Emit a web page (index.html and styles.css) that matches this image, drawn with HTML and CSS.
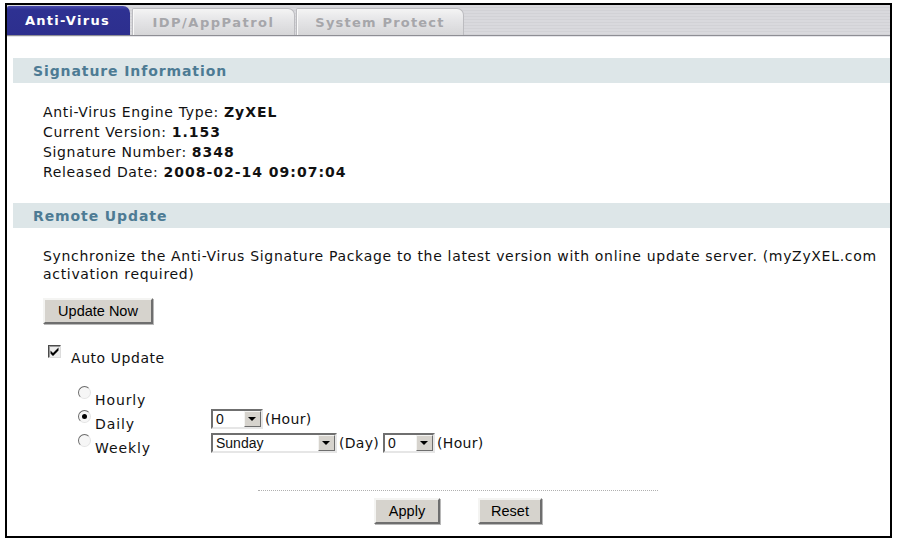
FILE: index.html
```html
<!DOCTYPE html>
<html>
<head>
<meta charset="utf-8">
<link rel="stylesheet" href="styles.css">
</head>
<body>
<div class="frame">
  <div class="tabs">
    <div class="tab tab-active">Anti-Virus</div>
    <div class="tab tab-idp">IDP/AppPatrol</div>
    <div class="tab tab-sys">System Protect</div>
  </div>
  <div class="content">
    <div class="section-head">Signature Information</div>
    <div class="info">
      <div class="info-line">Anti-Virus Engine Type: <b>ZyXEL</b></div>
      <div class="info-line">Current Version: <b>1.153</b></div>
      <div class="info-line">Signature Number: <b>8348</b></div>
      <div class="info-line">Released Date: <b>2008-02-14 09:07:04</b></div>
    </div>
    <div class="section-head">Remote Update</div>
    <div class="remote">
      <p class="desc">Synchronize the Anti-Virus Signature Package to the latest version with online update server. (myZyXEL.com<br>activation required)</p>
      <button class="btn btn-update">Update Now</button>
      <div class="check-row">
        <span class="checkbox"><svg width="11" height="11" viewBox="0 0 11 11"><path d="M1.5 4.5 L4 7 L9.5 1.5 L9.5 4.5 L4 10 L1.5 7.5 Z" fill="#000"/></svg></span>
        <span class="check-label">Auto Update</span>
      </div>
      <div class="schedule">
        <div class="opt"><span class="radio"></span><span class="opt-label">Hourly</span></div>
        <div class="opt-fields"></div>
        <div class="opt"><span class="radio radio-on"></span><span class="opt-label">Daily</span></div>
        <div class="opt-fields">
          <div class="select sel-hour"><span class="sel-val">0</span><span class="sel-btn"></span></div>
          <span class="unit">(Hour)</span>
        </div>
        <div class="opt"><span class="radio"></span><span class="opt-label">Weekly</span></div>
        <div class="opt-fields">
          <div class="select sel-day"><span class="sel-val">Sunday</span><span class="sel-btn"></span></div>
          <span class="unit unit-gap">(Day)</span>
          <div class="select sel-hour"><span class="sel-val">0</span><span class="sel-btn"></span></div>
          <span class="unit">(Hour)</span>
        </div>
      </div>
    </div>
    <div class="footer">
      <div class="actions">
        <button class="btn btn-apply">Apply</button>
        <button class="btn btn-reset">Reset</button>
      </div>
    </div>
  </div>
</div>
</body>
</html>
```
FILE: styles.css
```css
html, body {
  margin: 0;
  padding: 0;
  background: #fff;
}
body {
  font-family: "DejaVu Sans", Verdana, sans-serif;
  font-size: 14px;
  letter-spacing: 0.65px;
  color: #111;
}
b {
  letter-spacing: 1px;
}
.frame {
  margin: 3px 0 0 5px;
  width: 883px;
  height: 531px;
  border: 2px solid #000;
  display: flex;
  flex-direction: column;
  overflow: hidden;
}
.tabs {
  height: 30px;
  display: flex;
  align-items: flex-end;
  border-bottom: 1px solid #8e8e94;
  box-shadow: 0 1px 0 #e6e6ea;
  background: repeating-linear-gradient(to bottom, #d9d9dd 0, #d9d9dd 2px, #d2d2d6 2px, #d2d2d6 3px);
}
.tab {
  height: 28px;
  box-sizing: border-box;
  display: flex;
  align-items: center;
  justify-content: center;
  font-weight: bold;
  font-size: 13px;
  letter-spacing: 1px;
  border-radius: 2px 7px 0 0;
}
.tab-active {
  width: 123px;
  height: 29px;
  background: linear-gradient(to bottom, #4a4cae 0, #2e3192 4px, #2d2f8e 100%);
  color: #fff;
  padding-right: 2px;
  letter-spacing: 1.3px;
}
.tab-idp, .tab-sys {
  color: #a6a6aa;
  background: linear-gradient(to bottom, #f4f4f4 0, #e6e6e8 40%, #d6d6d8 100%);
  border: 1px solid #bcbcc0;
  border-bottom: none;
  box-shadow: inset 1px 0 0 #fafafa;
  height: 27px;
}
.tab-idp {
  width: 163px;
  margin-left: 2px;
  letter-spacing: 1.5px;
}
.tab-sys {
  width: 168px;
  margin-left: 1px;
  letter-spacing: 1.2px;
}
.content {
  flex: 1;
  padding: 22px 0 0 6px;
}
.section-head {
  height: 25px;
  background: #dde6e8;
  color: #4d7b94;
  font-weight: bold;
  letter-spacing: 0.9px;
  display: flex;
  align-items: center;
  padding-left: 20px;
}
.info {
  padding: 19px 0 21px 30px;
}
.info-line {
  height: 20px;
  line-height: 20px;
}
.remote {
  padding: 19px 0 0 30px;
}
.desc {
  margin: 0;
  line-height: 18px;
  white-space: nowrap;
  letter-spacing: 0.68px;
}
.btn {
  font-family: "Liberation Sans", Arial, sans-serif;
  font-size: 14.5px;
  letter-spacing: 0;
  color: #000;
  background: #d6d3cd;
  border: 2px solid;
  border-color: #f4f4f2 #6e6e6e #6e6e6e #f4f4f2;
  box-shadow: 1px 1px 0 #b8b8b8;
  padding: 0;
  height: 26px;
}
.btn-update {
  display: block;
  margin-top: 15px;
  width: 110px;
}
.check-row {
  display: flex;
  align-items: flex-start;
  margin: 21px 0 0 5px;
  height: 22px;
}
.checkbox {
  width: 13px;
  height: 13px;
  box-sizing: border-box;
  border: 1px solid;
  border-color: #4a4a4a #dcdcdc #dcdcdc #4a4a4a;
  box-shadow: inset 1px 1px 0 #9a9a9a;
  background: #ececec;
  display: flex;
  align-items: center;
  justify-content: center;
}
.checkbox svg {
  display: block;
}
.check-label {
  margin-left: 10px;
  margin-top: 3px;
  line-height: 20px;
  letter-spacing: 0.55px;
}
.schedule {
  display: grid;
  grid-template-columns: 133px auto;
  grid-auto-rows: 24px;
  margin: 18px 0 0 35px;
}
.opt {
  display: flex;
  align-items: flex-start;
}
.radio {
  width: 13px;
  height: 13px;
  box-sizing: border-box;
  border-radius: 50%;
  border: 1px solid;
  border-color: #6a6a6a #e4e4e4 #e4e4e4 #6a6a6a;
  background: #f6f6f6;
  margin-top: 1px;
  position: relative;
}
.radio-on::after {
  content: "";
  position: absolute;
  left: 3px;
  top: 3px;
  width: 5px;
  height: 5px;
  border-radius: 50%;
  background: #000;
}
.opt-label {
  margin-left: 4px;
  margin-top: 8px;
  line-height: 14px;
  letter-spacing: 0.9px;
}
.opt-fields {
  display: flex;
  align-items: center;
  gap: 2px;
  height: 20px;
}
.select {
  height: 20px;
  box-sizing: border-box;
  border: 2px solid;
  border-color: #6f6f6f #e6e6e6 #e6e6e6 #6f6f6f;
  background: #fff;
  display: flex;
  align-items: stretch;
  font-family: "Liberation Sans", Arial, sans-serif;
  font-size: 14px;
  letter-spacing: 0;
}
.sel-hour {
  width: 52px;
}
.sel-day {
  width: 126px;
}
.sel-val {
  flex: 1;
  padding-left: 3px;
  line-height: 16px;
}
.sel-btn {
  width: 17px;
  background: #d6d3cd;
  border: 1px solid;
  border-color: #f4f4f2 #6e6e6e #6e6e6e #f4f4f2;
  box-sizing: border-box;
  position: relative;
}
.sel-btn::after {
  content: "";
  position: absolute;
  left: 3px;
  top: 5px;
  border-left: 4px solid transparent;
  border-right: 4px solid transparent;
  border-top: 4px solid #000;
}
.unit {
  letter-spacing: 0.3px;
}
.unit-gap {
  margin-right: 2px;
}
.footer {
  margin: 33px 0 0 245px;
  width: 400px;
  border-top: 1px dotted #b0b0b0;
  padding-top: 7px;
}
.actions {
  display: flex;
  justify-content: center;
  gap: 38px;
}
.btn-apply {
  width: 66px;
}
.btn-reset {
  width: 64px;
}
```
